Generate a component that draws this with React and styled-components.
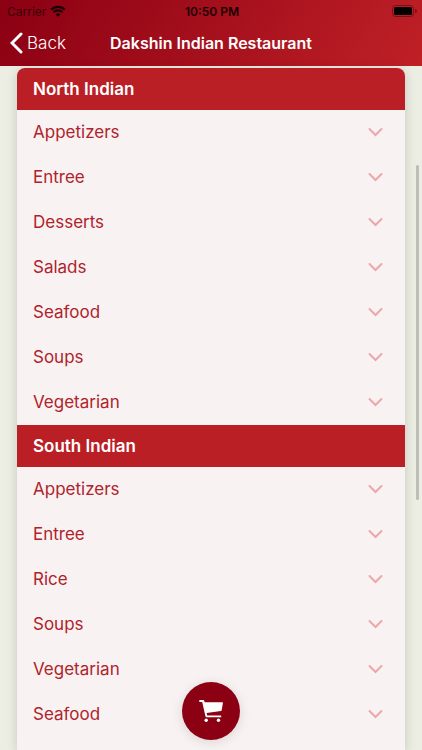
import React from 'react'
import styled, { createGlobalStyle } from 'styled-components'

const menu = [
  {
    name: 'North Indian',
    categories: ['Appetizers', 'Entree', 'Desserts', 'Salads', 'Seafood', 'Soups', 'Vegetarian'],
  },
  {
    name: 'South Indian',
    categories: ['Appetizers', 'Entree', 'Rice', 'Soups', 'Vegetarian', 'Seafood'],
  },
]

const GlobalStyle = createGlobalStyle`
  * {
    box-sizing: border-box;
  }

  body {
    margin: 0;
    background: #ecede3;
    font-family: Inter, 'Liberation Sans', sans-serif;
  }

  h1, h2, ul {
    margin: 0;
    padding: 0;
  }

  button {
    border: 0;
    font-family: inherit;
    cursor: pointer;
  }
`

const Screen = styled.div`
  position: relative;
  display: flex;
  flex-direction: column;
  height: 100vh;
  overflow: hidden;
`

const Header = styled.header`
  background: linear-gradient(120deg, #8b0013, #bf2026);
`

const StatusBar = styled.div`
  display: grid;
  grid-template-columns: 1fr auto 1fr;
  align-items: center;
  height: 22px;
  padding: 0 5px 0 7px;
  font-size: 12px;
  color: #1c0003;
`

const Carrier = styled.div`
  display: flex;
  align-items: center;
  gap: 4px;
  color: #3a0006;
`

const Clock = styled.time`
  font-weight: 600;
`

const Battery = styled.svg`
  justify-self: end;
`

const NavBar = styled.nav`
  display: grid;
  grid-template-columns: 1fr auto 1fr;
  align-items: center;
  height: 44px;
  padding: 0 10px 2px;
`

const BackButton = styled.button`
  display: flex;
  align-items: center;
  justify-self: start;
  gap: 4px;
  padding: 0;
  background: none;
  color: #fff;
  font-size: 17px;
  font-weight: 300;
`

const Title = styled.h1`
  color: #fff;
  font-size: 16px;
  font-weight: 600;
  white-space: nowrap;
`

const Content = styled.main`
  position: relative;
  flex: 1;
  display: flex;
  min-height: 0;
  padding: 2px 17px 0;
`

const Card = styled.div`
  flex: 1;
  overflow: hidden;
  border-radius: 8px 8px 0 0;
  background: #f8f2f2;
  box-shadow: 0 2px 12px rgba(0, 0, 0, 0.16);
`

const SectionTitle = styled.h2`
  height: 42px;
  padding: 0 16px;
  background: #bb1f26;
  color: #fff;
  font-size: 17px;
  font-weight: 600;
  line-height: 42px;
`

const CategoryList = styled.ul`
  list-style: none;
`

const CategoryButton = styled.button`
  display: flex;
  align-items: center;
  justify-content: space-between;
  width: 100%;
  height: 45px;
  padding: 0 22px 2px 16px;
  background: none;
  color: #b0232b;
  font-size: 17px;
  font-weight: 400;
`

const ScrollIndicator = styled.div`
  position: absolute;
  top: 99px;
  right: 3px;
  width: 3px;
  height: 49%;
  border-radius: 2px;
  background: #bdbeb6;
`

const CartButton = styled.button`
  position: absolute;
  bottom: 10px;
  left: 50%;
  display: flex;
  align-items: center;
  justify-content: center;
  width: 58px;
  height: 58px;
  padding: 0;
  border-radius: 50%;
  background: #8b0013;
  box-shadow: 0 2px 12px rgba(0, 0, 0, 0.12);
  color: #fff;
  transform: translateX(-50%);
`

const WifiIcon = () => (
  <svg width="16" height="12" viewBox="0 0 16 12" fill="none" stroke="#1c0003" strokeWidth="2.2">
    <path d="M1.2 4.600a9.600 9.600 0 0 1 13.600 0M3.600 7.200a6.200 6.200 0 0 1 8.800 0" />
    <path d="M8 11.800 5.600 9.400a3.400 3.400 0 0 1 4.800 0z" fill="#1c0003" stroke="none" />
  </svg>
)

const BatteryIcon = () => (
  <Battery width="25" height="12" viewBox="0 0 25 12" role="img" aria-label="Battery full">
    <rect x="0.5" y="0.5" width="21" height="11" rx="3" fill="none" stroke="#7a1016" />
    <rect x="2" y="2" width="18" height="8" rx="1.6" fill="#000" />
    <path d="M23 4v4a2 2 0 0 0 0-4z" fill="#7a1016" />
  </Battery>
)

const BackIcon = () => (
  <svg width="13" height="22" viewBox="0 0 13 22" fill="none" stroke="#fff" strokeWidth="3">
    <path d="M11 2 2 11l9 9" strokeLinecap="round" strokeLinejoin="miter" />
  </svg>
)

const ChevronDown = () => (
  <svg width="15" height="10" viewBox="0 0 15 10" fill="none" stroke="#eda6a9" strokeWidth="2">
    <path d="M1.500 2 7.500 8 13.500 2" strokeLinecap="round" strokeLinejoin="miter" />
  </svg>
)

const CartIcon = () => (
  <svg width="26" height="24" viewBox="0 0 26 24" fill="currentColor">
    <path d="M2 1h3.200q.8 0 1 .8l.5 1.500H24.500q.5 0 .4.600L23.700 11.200q-.1.700-.8.800L8.600 14l.7 2.500H22.500q.8 0 .8.900t-.8.900H8.500q-.8 0-1-.8L4.200 2.900H2q-.9 0-.9-.95T2 1z" />
    <circle cx="8.200" cy="21.200" r="1.700" />
    <circle cx="20.500" cy="21.200" r="1.700" />
  </svg>
)

const App = () => (
  <>
    <GlobalStyle />
    <Screen>
      <Header>
        <StatusBar>
          <Carrier>
            Carrier
            <WifiIcon />
          </Carrier>
          <Clock>10:50 PM</Clock>
          <BatteryIcon />
        </StatusBar>
        <NavBar>
          <BackButton>
            <BackIcon />
            Back
          </BackButton>
          <Title>Dakshin Indian Restaurant</Title>
        </NavBar>
      </Header>
      <Content>
        <Card>
          {menu.map(({ name, categories }) => (
            <section key={name}>
              <SectionTitle>{name}</SectionTitle>
              <CategoryList>
                {categories.map(category => (
                  <li key={category}>
                    <CategoryButton aria-expanded="false">
                      {category}
                      <ChevronDown />
                    </CategoryButton>
                  </li>
                ))}
              </CategoryList>
            </section>
          ))}
        </Card>
        <ScrollIndicator />
      </Content>
      <CartButton aria-label="View cart">
        <CartIcon />
      </CartButton>
    </Screen>
  </>
)

export default App
